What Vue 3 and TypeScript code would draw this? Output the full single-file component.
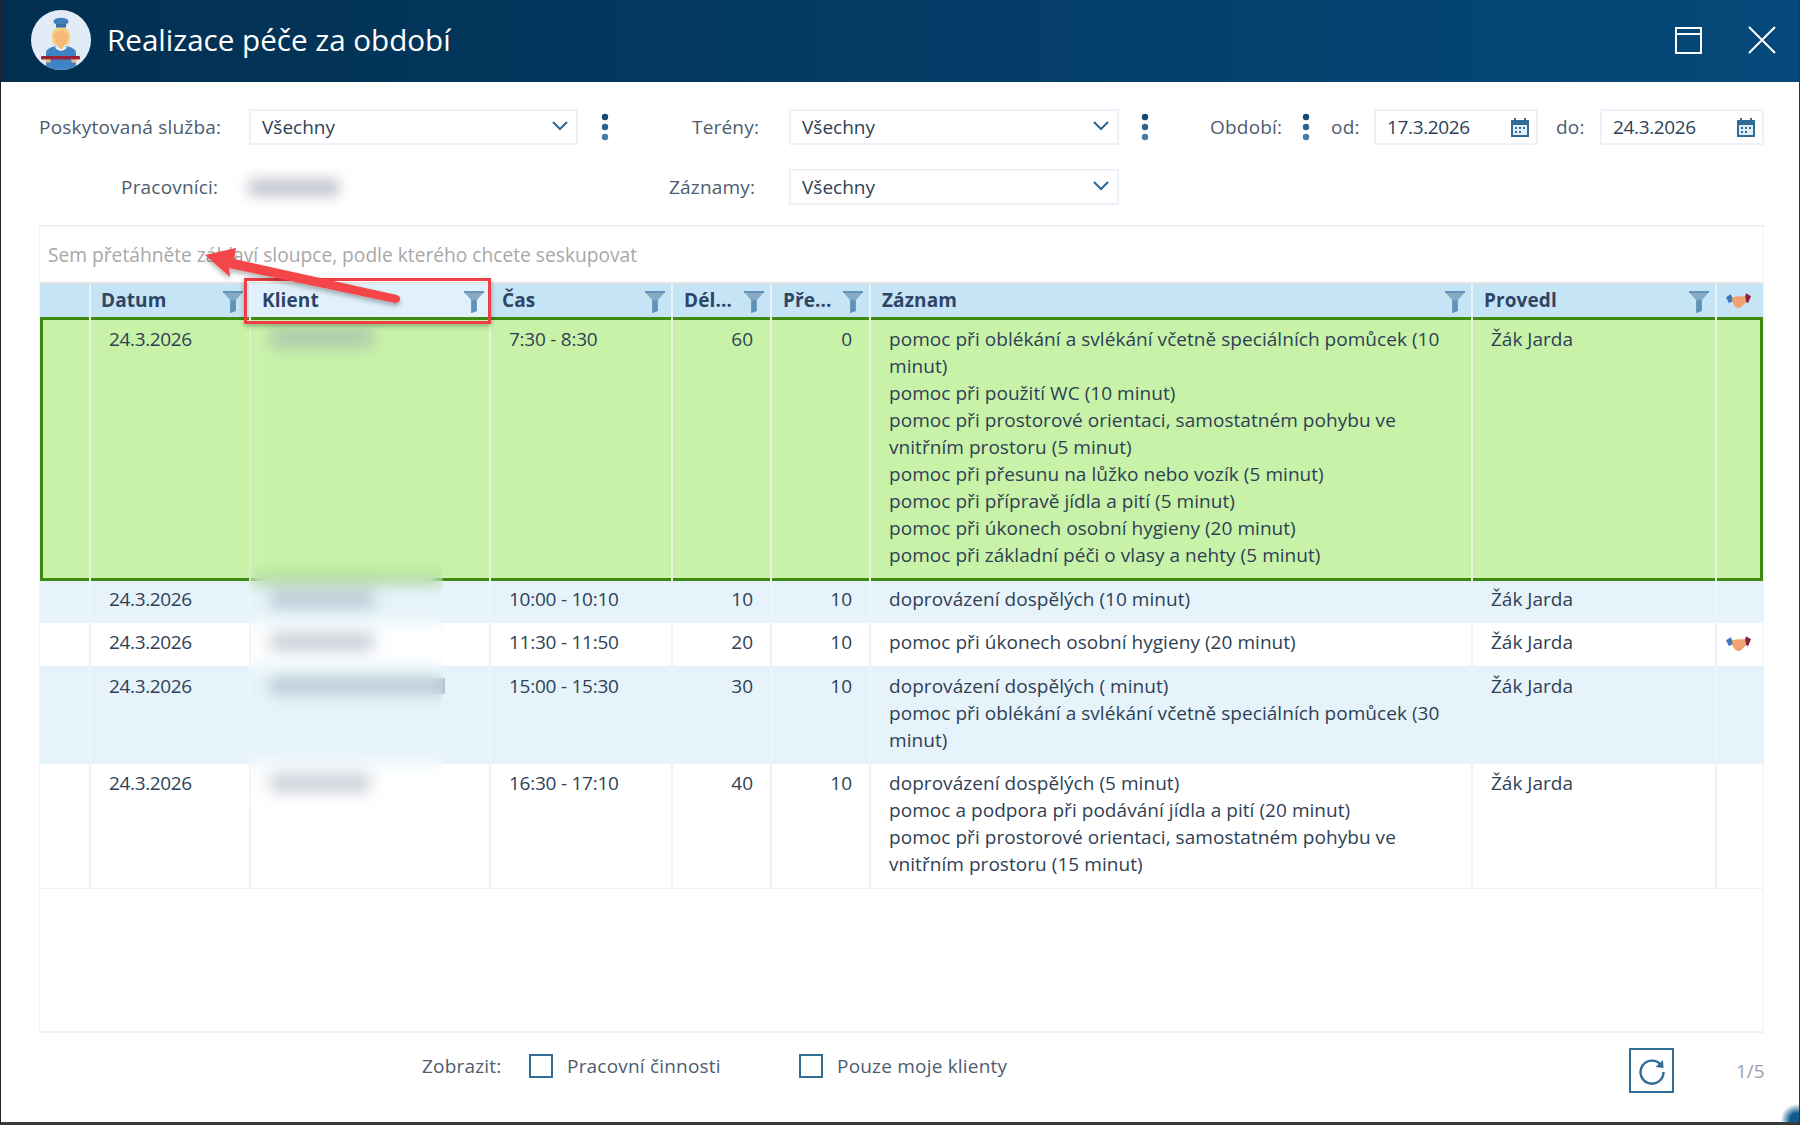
<script setup lang="ts">
interface Row {
  time: string
  len: number
  extra: number
  lines: string[]
  blur: number
  tone: string
  hand?: boolean
}

const rows: Row[] = [
  {
    time: '7:30 - 8:30', len: 60, extra: 0, blur: 104, tone: 'green',
    lines: [
      'pomoc při oblékání a svlékání včetně speciálních pomůcek (10',
      'minut)',
      'pomoc při použití WC (10 minut)',
      'pomoc při prostorové orientaci, samostatném pohybu ve',
      'vnitřním prostoru (5 minut)',
      'pomoc při přesunu na lůžko nebo vozík (5 minut)',
      'pomoc při přípravě jídla a pití (5 minut)',
      'pomoc při úkonech osobní hygieny (20 minut)',
      'pomoc při základní péči o vlasy a nehty (5 minut)'
    ]
  },
  { time: '10:00 - 10:10', len: 10, extra: 10, blur: 104, tone: 'blue', lines: ['doprovázení dospělých (10 minut)'] },
  { time: '11:30 - 11:50', len: 20, extra: 10, blur: 104, tone: 'white', hand: true, lines: ['pomoc při úkonech osobní hygieny (20 minut)'] },
  {
    time: '15:00 - 15:30', len: 30, extra: 10, blur: 175, tone: 'blue',
    lines: ['doprovázení dospělých ( minut)', 'pomoc při oblékání a svlékání včetně speciálních pomůcek (30', 'minut)']
  },
  {
    time: '16:30 - 17:10', len: 40, extra: 10, blur: 100, tone: 'white',
    lines: [
      'doprovázení dospělých (5 minut)',
      'pomoc a podpora při podávání jídla a pití (20 minut)',
      'pomoc při prostorové orientaci, samostatném pohybu ve',
      'vnitřním prostoru (15 minut)'
    ]
  }
]

const headers = [
  { label: 'Datum', filter: true },
  { label: 'Klient', filter: true, active: true },
  { label: 'Čas', filter: true },
  { label: 'Dél...', filter: true },
  { label: 'Pře...', filter: true },
  { label: 'Záznam', filter: true },
  { label: 'Provedl', filter: true }
]
</script>

<template>
  <div class="window">
    <header class="titlebar">
      <svg class="avatar" viewBox="0 0 60 60">
        <defs><clipPath id="av"><circle cx="30" cy="30" r="30" /></clipPath></defs>
        <circle cx="30" cy="30" r="30" fill="#e2ecf6" />
        <g clip-path="url(#av)">
          <path d="M15 60 L15 43 C15 39 20 37 25 36 L35 36 C40 37 45 39 45 43 L45 60 Z" fill="#4083c4" />
          <path d="M21 27 C20 14 40 14 39 27 C39 31 38 34 36 35 L24 35 C22 34 21 31 21 27 Z" fill="#f2d27c" />
          <path d="M23 24 C26 23 29 21 31 20 C33 22 35 23 37 24 C37 31 34 35 33 35 L33 38 C33 40 27 40 27 38 L27 35 C26 35 23 31 23 24 Z" fill="#f6b878" />
          <path d="M24 37 L27 36 C28 40 32 40 33 36 L36 37 C34 42 26 42 24 37 Z" fill="#f4f7fa" />
          <ellipse cx="30" cy="11.5" rx="7.5" ry="3.8" fill="#3f7fbe" />
          <rect x="25" y="14" width="10" height="3.5" fill="#356ea8" />
          <rect x="10" y="46" width="39" height="3.6" rx="1" fill="#99233f" />
          <path d="M14 49.6 h6 l-1 3 h-4 Z M40 49.6 h6 l-1 3 h-4 Z" fill="#f6b878" />
        </g>
      </svg>
      <h1 class="title">Realizace péče za období</h1>
      <svg class="winicon max" viewBox="0 0 27 27" fill="none" stroke="#fff" stroke-width="2">
        <rect x="1" y="1" width="25" height="25" />
        <path d="M1 7 H26" />
      </svg>
      <svg class="winicon close" viewBox="0 0 28 28" fill="none" stroke="#fff" stroke-width="2">
        <path d="M1 1 L27 27 M27 1 L1 27" />
      </svg>
    </header>

    <main class="content">
      <div class="filter-row">
        <span class="label l-service">Poskytovaná služba:</span>
        <div class="field select s-service">
          <span>Všechny</span>
          <svg class="chev" viewBox="0 0 16 10" fill="none" stroke="#2f6690" stroke-width="2"><path d="M1 1 L8 8 L15 1" /></svg>
        </div>
        <svg class="dots d-service" viewBox="0 0 8 28"><circle cx="4" cy="4" r="3.2" fill="#0d4a78" /><circle cx="4" cy="14" r="3.2" fill="#2d628c" /><circle cx="4" cy="24" r="3.2" fill="#4a7ca2" /></svg>
        <span class="label l-teren">Terény:</span>
        <div class="field select s-teren">
          <span>Všechny</span>
          <svg class="chev" viewBox="0 0 16 10" fill="none" stroke="#2f6690" stroke-width="2"><path d="M1 1 L8 8 L15 1" /></svg>
        </div>
        <svg class="dots d-teren" viewBox="0 0 8 28"><circle cx="4" cy="4" r="3.2" fill="#0d4a78" /><circle cx="4" cy="14" r="3.2" fill="#2d628c" /><circle cx="4" cy="24" r="3.2" fill="#4a7ca2" /></svg>
        <span class="label l-period">Období:</span>
        <svg class="dots d-period" viewBox="0 0 8 28"><circle cx="4" cy="4" r="3.2" fill="#0d4a78" /><circle cx="4" cy="14" r="3.2" fill="#2d628c" /><circle cx="4" cy="24" r="3.2" fill="#4a7ca2" /></svg>
        <span class="label l-od">od:</span>
        <div class="field date d-from">
          <span class="digits">17.3.2026</span>
          <svg class="cal" viewBox="0 0 18 19"><path d="M3 0 H5 V2 H13 V0 H15 V2 H18 V19 H0 V2 H3 Z" fill="#2f6c96" /><rect x="2" y="7" width="14" height="10" fill="#e4eef5" /><path d="M4 9 h2 v2 h-2 z M8 9 h2 v2 h-2 z M12 9 h2 v2 h-2 z M4 13 h2 v2 h-2 z M8 13 h2 v2 h-2 z" fill="#2f6c96" /></svg>
        </div>
        <span class="label l-do">do:</span>
        <div class="field date d-to">
          <span class="digits">24.3.2026</span>
          <svg class="cal" viewBox="0 0 18 19"><path d="M3 0 H5 V2 H13 V0 H15 V2 H18 V19 H0 V2 H3 Z" fill="#2f6c96" /><rect x="2" y="7" width="14" height="10" fill="#e4eef5" /><path d="M4 9 h2 v2 h-2 z M8 9 h2 v2 h-2 z M12 9 h2 v2 h-2 z M4 13 h2 v2 h-2 z M8 13 h2 v2 h-2 z" fill="#2f6c96" /></svg>
        </div>
      </div>

      <div class="filter-row second">
        <span class="label l-worker">Pracovníci:</span>
        <div class="worker-blur"><i></i></div>
        <span class="label l-record">Záznamy:</span>
        <div class="field select s-teren">
          <span>Všechny</span>
          <svg class="chev" viewBox="0 0 16 10" fill="none" stroke="#2f6690" stroke-width="2"><path d="M1 1 L8 8 L15 1" /></svg>
        </div>
      </div>

      <section class="grid-panel">
        <div class="group-hint">Sem přetáhněte záhlaví sloupce, podle kterého chcete seskupovat</div>

        <div class="row head">
          <div class="cell"></div>
          <div v-for="h in headers" :key="h.label" class="cell hcell" :class="{ active: h.active }">
            <span>{{ h.label }}</span>
            <svg class="funnel" viewBox="0 0 22 24">
              <path d="M0 0 H22 V2 H0 Z" fill="#5b8db0" />
              <path d="M1 2 H21 L14 10 V22 L8 24 V10 Z" fill="#86a9c4" />
              <path d="M8 10 H14 V22 L8 24 Z" fill="#5f92b8" />
            </svg>
          </div>
          <div class="cell hcell hand-cell">
            <svg class="hand" viewBox="0 0 26 16">
              <path d="M0 4 L5 1 L8 8 L3 10 Z" fill="#3f76c0" />
              <path d="M26 3 L21 0 L18 8 L23 10 Z" fill="#8e1f3a" />
              <path d="M6 4 L13 3 L20 3 L21 9 L15 15 C12 16 9 14 7 10 Z" fill="#eea46e" />
            </svg>
          </div>
        </div>

        <div class="body">
          <div v-for="(r, i) in rows" :key="i" class="row data" :class="r.tone">
            <div class="cell"></div>
            <div class="cell digits">24.3.2026</div>
            <div class="cell"><i class="name-bar" :style="{ width: r.blur + 'px' }"></i></div>
            <div class="cell time">{{ r.time }}</div>
            <div class="cell num">{{ r.len }}</div>
            <div class="cell num">{{ r.extra }}</div>
            <div class="cell text">
              <div v-for="(l, j) in r.lines" :key="j">{{ l }}</div>
            </div>
            <div class="cell">Žák Jarda</div>
            <div class="cell hand-body">
              <svg v-if="r.hand" class="hand" viewBox="0 0 26 16">
                <path d="M0 4 L5 1 L8 8 L3 10 Z" fill="#3f76c0" />
                <path d="M26 3 L21 0 L18 8 L23 10 Z" fill="#8e1f3a" />
                <path d="M6 4 L13 3 L20 3 L21 9 L15 15 C12 16 9 14 7 10 Z" fill="#eea46e" />
              </svg>
            </div>
          </div>
          <div class="blur-strip"></div>
        </div>
      </section>

      <footer class="footer">
        <span class="label z-label">Zobrazit:</span>
        <i class="check"></i>
        <span class="label c-one">Pracovní činnosti</span>
        <i class="check"></i>
        <span class="label c-two">Pouze moje klienty</span>
        <button class="refresh" type="button" aria-label="Obnovit">
          <svg viewBox="0 0 28 28" width="28" height="28" fill="none">
            <path d="M23 8 A11.5 11.5 0 1 0 25.5 15" stroke="#2f6c96" stroke-width="2.4" />
            <path d="M25 3 L25.5 11 L17.5 10 Z" fill="#2f6c96" />
          </svg>
        </button>
        <span class="pager">1/5</span>
      </footer>
    </main>

    <div class="annot-box"></div>
    <svg class="annot-arrow" viewBox="0 0 240 80" width="240" height="80">
      <defs>
        <filter id="sh" x="-10%" y="-20%" width="120%" height="150%">
          <feDropShadow dx="0" dy="3" stdDeviation="2.5" flood-color="#000" flood-opacity="0.3" />
        </filter>
      </defs>
      <path d="M4 23 L35 16 L33 27 L196 63 C201 65 200 71 194 71 L28 36 L29 45 Z" fill="#f44548" filter="url(#sh)" />
    </svg>
    <div class="corner"></div>
  </div>
</template>

<style>
html, body { margin: 0; background: #fff; }
</style>

<style scoped>
.window {
  position: relative;
  width: 1800px;
  height: 1125px;
  box-sizing: border-box;
  overflow: hidden;
  background: #fff;
  border-left: 1px solid #222;
  border-right: 1px solid #333;
  border-bottom: 3px solid #3a3a3a;
  font-family: "Open Sans", "Noto Sans", sans-serif;
  font-size: 19px;
  color: #2f3f55;
}
.titlebar {
  display: flex;
  align-items: center;
  height: 82px;
  margin-left: -1px;
  margin-right: -1px;
  padding: 0 24px 0 31px;
  box-sizing: border-box;
  background: linear-gradient(90deg, #022f50 0%, #05497a 100%);
}
.avatar { width: 60px; height: 60px; margin-top: -2px; }
.title {
  margin: 0 0 0 16px;
  font-size: 29.6px;
  font-weight: 400;
  color: #fff;
  flex: 1;
  margin-top: -3px;
}
.winicon { display: block; }
.winicon.max { width: 27px; height: 27px; margin-right: 46px; margin-top: -2px; }
.winicon.close { width: 28px; height: 28px; margin-top: -2px; }

.content { padding: 27px 34px 0 38px; }
.filter-row { display: flex; align-items: center; height: 36px; }
.filter-row.second { margin-top: 24px; }
.label { color: #4d5c70; white-space: nowrap; line-height: 36px; letter-spacing: .2px; }
.field {
  display: flex;
  align-items: center;
  justify-content: space-between;
  height: 36px;
  box-sizing: border-box;
  border: 2px solid #eef1fa;
  background: #fff;
  padding: 0 8px 0 11px;
  color: #2f3f55;
}
.s-service { width: 329px; margin-left: 25px; }
.s-teren { width: 330px; }
.chev { width: 16px; height: 10px; margin-top: -3px; }
.l-service { width: 185px; }
.dots { width: 8px; height: 28px; flex: none; }
.d-service { margin: 0 23px; }
.l-teren { margin-left: 60px; margin-right: 31px; width: 66px; }
.d-teren { margin: 0 22px; }
.l-period { margin-left: 39px; width: 72px; }
.d-period { margin-left: 20px; }
.l-od { margin-left: 21px; width: 29px; }
.date { width: 164px; padding-right: 7px; }
.d-from { margin-left: 14px; }
.d-to { margin-left: 15px; }
.l-do { margin-left: 18px; width: 29px; }
.cal { width: 18px; height: 19px; }
.digits { letter-spacing: -.35px; }

.l-worker { margin-left: 82px; width: 97px; }
.worker-blur { width: 113px; height: 30px; margin-left: 19px; display: flex; align-items: center; justify-content: center; }
.worker-blur i { display: block; width: 90px; height: 17px; background: #c0c4ce; filter: blur(7px); }
.l-record { margin-left: 319px; margin-right: 34px; width: 86px; }

.grid-panel {
  margin-top: 20px;
  width: 1725px;
  height: 808px;
  box-sizing: border-box;
  border: 2px solid #eef1fa;
  border-left-width: 1px;
  border-right-width: 1px;
}
.group-hint {
  height: 55px;
  line-height: 55px;
  padding-left: 8px;
  color: #a8a8a8;
  font-size: 19.2px;
  box-sizing: border-box;
}
.row {
  display: grid;
  grid-template-columns: 51px 160px 240px 182px 99px 99px 602px 244px 46px;
}
.head {
  height: 36px;
  background: #c5e4f5;
  border-top: 2px solid #e4e4e4;
  box-sizing: border-box;
  font-weight: 700;
  color: #2f4566;
  letter-spacing: .1px;
}
.head .cell { border-right: 2px solid #eaf5fb; }
.hcell {
  display: flex;
  align-items: center;
  justify-content: space-between;
  padding: 0 6px 2px 11px;
  box-sizing: border-box;
  min-width: 0;
  line-height: 33px;
}
.hcell:nth-child(2) { padding-left: 10px; }
.hcell.active { background: #e0f1fb; padding-left: 11px; padding-right: 5px; }
.funnel { width: 20px; height: 22px; flex: none; margin-top: 3px; }
.hand { width: 25px; height: 16px; display: block; }
.hand-cell { padding: 0 0 2px 9px; }
.head .cell:last-child { border-right: 0; }

.data { line-height: 27px; }
.data .cell {
  padding: 6px 16px 10px 18px;
  box-sizing: border-box;
  min-width: 0;
  border-right: 2px solid #eef1fa;
  white-space: nowrap;
}
.data .cell:last-child { border-right: 0; }
.data .num { text-align: right; padding-right: 17px; }
.data .time { letter-spacing: -.25px; }
.data .text { letter-spacing: .05px; }
.data .hand-body { padding: 13px 0 0 9px; }
.data:nth-child(4) .cell { padding-top: 7px; }
.blue { background: #e6f3fa; }
.white { background: #fff; }
.green {
  position: relative;
  z-index: 1;
  background: #c8f2a8;
  box-shadow: inset 0 0 0 3px #3f8a10;
  height: 264px;
  margin-top: -1px;
  margin-bottom: -1px;
}
.data.green .cell { padding-top: 9px; border-right-color: #e6f3dc; }
.blue .cell { border-right-color: #eef6fb; }
.name-bar {
  display: block;
  height: 16px;
  margin-top: 5px;
  background: #8f9fb0;
  opacity: .55;
  margin-left: 1px;
}
.body {
  position: relative;
  border-bottom: 2px solid #eef1fa;
  height: 572px;
  box-sizing: border-box;
}
.blur-strip {
  position: absolute;
  z-index: 2;
  left: 209px;
  top: 6px;
  width: 194px;
  height: 486px;
  -webkit-backdrop-filter: blur(8px);
  backdrop-filter: blur(8px);
}

.footer { display: flex; align-items: center; height: 45px; margin-top: 15px; position: relative; }
.z-label { margin-left: 383px; width: 107px; margin-top: -10px; }
.check {
  display: block;
  width: 24px;
  height: 24px;
  box-sizing: border-box;
  border: 2px solid #2f6c96;
  background: #fff;
  margin-top: -9px;
}
.c-one { margin-left: 14px; width: 232px; margin-top: -10px; }
.c-two { margin-left: 14px; width: 792px; margin-top: -10px; }
.refresh {
  width: 45px;
  height: 45px;
  padding: 0;
  display: flex;
  align-items: center;
  justify-content: center;
  border: 2px solid #2f6c96;
  background: #fff;
}
.pager { margin-left: 62px; color: #9a9fa8; margin-top: 1px; }

.annot-box {
  position: absolute;
  z-index: 5;
  left: 243px;
  top: 278px;
  width: 247px;
  height: 46px;
  box-sizing: border-box;
  border: 3px solid #ef3e46;
  box-shadow: 0 2px 5px rgba(0,0,0,.3);
}
.annot-arrow { position: absolute; z-index: 6; left: 200px; top: 232px; }
.corner {
  position: absolute;
  right: -14px;
  bottom: -14px;
  width: 32px;
  height: 32px;
  border-radius: 50%;
  background: radial-gradient(circle, #0e5a8c 30%, rgba(14,90,140,0) 72%);
}
</style>
